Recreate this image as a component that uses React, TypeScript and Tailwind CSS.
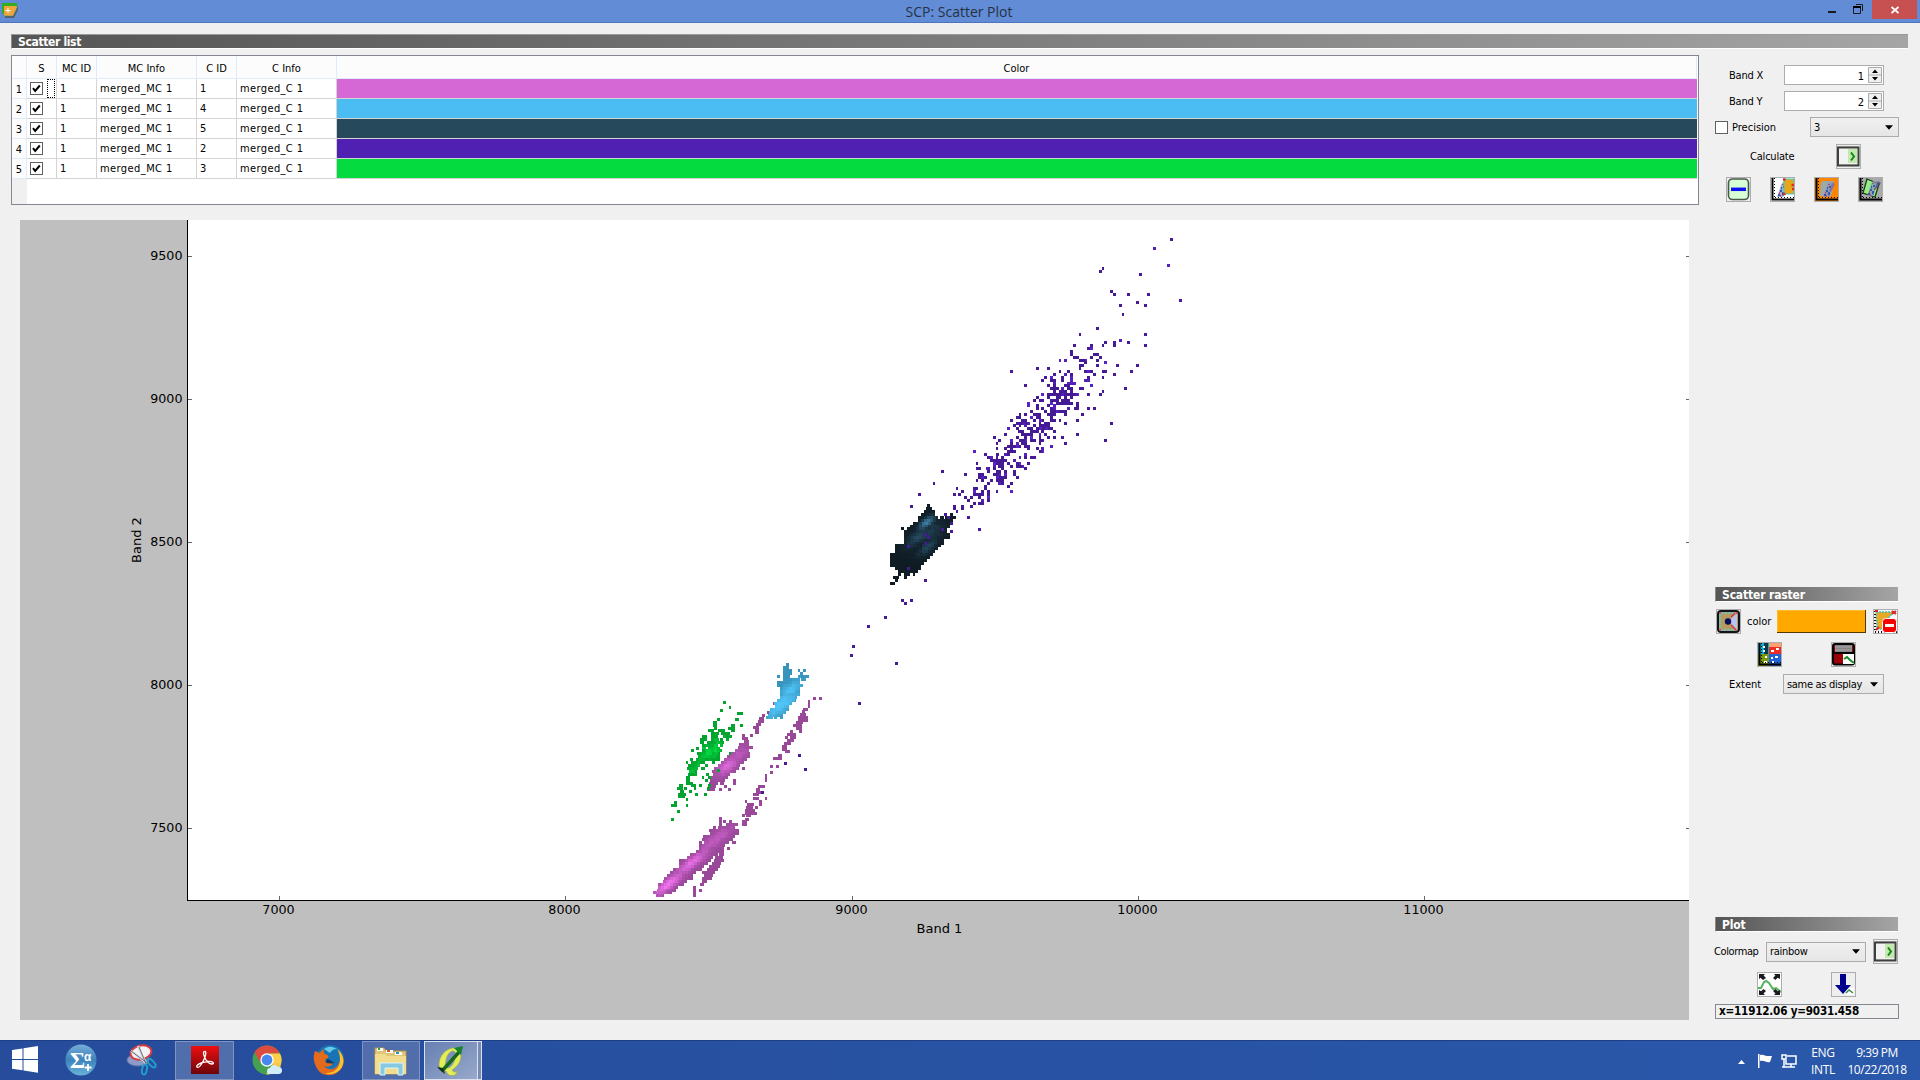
import React from "react";

type Spans = string;
type Ridge = { x: number; y: number; a: number; b: number; w: number };

const SLOPE = -0.78;

/* Every row is "top:start-end,start-end" in thirds of a pixel, relative to the origin. */
const purpleUpper: Spans =
  "54:630-639|81:579-588|132:621-630|141:426-432|150:417-426|159:537-546|210:450-459|219:459-468,501-510,561-570|237:657-666|243:528-537|252:477-486,552-561|279:486-492|321:408-417|339:357-363,552-561|357:477-486|363:432-441,459-468,501-510|372:339-348,390-399,426-432,459-468,552-561|381:381-399|390:330-339|399:330-339,399-417|408:339-357,390-399,417-426|417:297-303,312-321,357-381,408-417|423:372-381,432-441|432:357-372,408-417,468-477,528-537|441:228-237,261-270,357-363|450:150-159,297-303,321-330,372-399,426-441,510-519|459:279-288,312-321,330-339,399-408,459-468|468:252-261,270-279,303-312,330-339,381-390,426-432|477:243-252,270-288,303-312,330-339,372-390|486:279-288,321-348|492:192-201,261-270,279-288,312-330,390-399|501:270-297,303-312,321-339,357-372,492-501|510:279-288,297-321,330-339,426-432|519:243-252,261-312,312-357,381-390,417-426|528:228-237,261-270,288-303,312-321,330-339|537:219-228,237-252,270-297,303-330|546:201-210,270-279,288-339,348-357|552:201-210,228-237,261-270,279-288,348-357|561:228-237,243-252,270-288,321-330,342-357,381-390,399-408|570:210-219,252-261,270-321|579:177-183,192-201,219-243,261-288,312-321,363-372|588:168-183,210-219,228-243,270-279|597:150-159,183-201,219-228,237-252,270-288,297-303,348-357|606:168-210,237-243,252-270,312-321,450-459|612:159-168,177-183,192-201,219-228,237-270|621:141-150,168-177,201-219,228-279|630:174-192,210-237,243-252,279-288|639:132-141,183-219,237-243,252-261,348-357|648:99-108,168-177,192-201,210-219,237-243,261-270,279-288,303-312|657:114-123,150-159,177-201,210-228,237-252,432-441|666:108-114,150-159,168-177,183-201,237-243,312-321|675:141-183,192-210,270-279|681:108-114,132-141,150-159,201-210,228-237,243-252|690:39-48,141-168,237-252|699:72-81,108-117,132-150,192-201|708:81-99,108-114,123-132,177-183,192-201,210-228|717:90-141,159-168|726:48-54,99-132,141-150,168-183,201-210|735:99-108,114-132,150-159,168-192|741:48-63,78-90,99-108,123-132,192-201|750:81-90,108-123,132-141,159-168|759:12-21,54-72,99-123,132-141,159-168|768:54-81,108-141,168-177|777:48-54,63-72,90-99,108-132|786:81-90,114-132,150-159|795:72-81,141-150|801:39-54,72-81|810:3-12,39-48,63-72,81-90,108-114,150-159|819:0-3,39-72,81-90|828:12-21,30-39,54-63,81-90|837:21-30,63-72,81-90|846:39-48,54-72|855:3-12,30-39|860:3-12|888:21-30";

const purpleLower: Spans =
  "90:243-252|126:219-225|141:288-294|159:174-183,279-288,294-303|195:150-159,279-288|201:279-288|210:288-294|219:252-261|228:261-270|246:270-279|264:243-252,354-363|270:270-279|279:192-201|288:201-210|306:192-201|315:141-150|382:141-150|417:192-201|477:123-132,150-159|486:132-141|528:72-81|555:21-30|666:105-114";

const dark: Spans =
  "192:201-210|201:198-216|210:192-225|219:183-225,270-279|228:174-234,240-252,255-288|237:174-279|246:159-279|255:150-270|261:123-132,141-261|270:132-261,270-279|279:132-270|288:132-270|297:132-252|306:132-252|312:105-243|321:105-234|330:105-225|339:90-219|348:90-210|357:90-201|366:90-192|372:90-183|381:105-183|390:114-174|399:114-123,132-150,159-165|408:99-117,132-141|417:105-114|426:90-105";

const magenta: Spans =
  "411:237-246|420:237-246,249-258,267-276|429:237-246,258-294|438:219-228,234-285|447:207-297|456:210-297|465:189-285|474:186-280|483:177-186,192-267,276-288|492:177-255|501:177-252,261-270|510:168-252|519:150-234,237-252|528:141-220,225-250|537:117-213,222-250|546:117-204,216-243|555:117-192,207-240|564:99-186,201-234|573:90-168,186-225|582:81-159,192-219|591:72-159,186-216|600:69-141,186-201|609:54-132,180-190|618:54-114,159-168|627:51-108,159-168,177-186|633:39-96,159-168|641:48-72,159-168|163:306-315,330-339|172:306-324|181:312-327|190:297-327|199:294-339|208:285-327|217:270-330|226:261-330|235:252-321|244:243-312|253:234-300|262:222-297,306-315|271:216-288|280:219-270|289:213-264|298:210-255,279-288|307:207-234,240-250,279-288|316:204-228,252-261|323:201-225,237-246,264-273|67:399-405|94:381-390|103:366-375|112:357-372|121:354-372|130:348-363|139:339-357|148:345-357|153:345-357|51:519-528,537-546|60:504-510|69:504-510|75:504-510|84:489-504|91:486-495|100:480-498|109:475-504|117:475-504|124:467-486|133:459-486|142:468-486|151:450-459,477-486|160:441-468|169:435-444,450-468|178:441-460|187:432-452|196:426-441|203:426-441|211:435-450|223:414-425|231:399-426|255:390-399,408-417|272:390-399|283:375-381|291:375-381|298:375-381|314:354-375|323:348-360|332:348-372|340:339-357|350:339-357,375-381|359:315-321,357-366|368:320-339,357-366|377:318-339,345-354|386:315-345|395:315-350|402:306-315,318-333|413:315-327|420:306-320|428:306-320";

const green: Spans =
  "63:249-258|78:267-273|87:240-249|96:291-309|114:231-240,285-297|123:219-231|132:219-231,273-285,300-309|141:222-231,264-285|147:204-222,234-255,273-285|156:213-237,243-270|165:186-201,213-234,249-276|174:180-201,213-237,240-249,258-267|183:180-192,201-252|192:186-234,240-249|201:168-177,186-198,204-240|207:153-162,186-246|216:171-240,267-273|225:174-240|234:150-159,168-240|243:138-144,153-195,216-225|252:144-180,195-204|261:141-174,183-195|267:231-240|270:147-171|279:144-170,198-207|288:138-150,186-192,204-213|297:138-150,195-204|306:138-159|312:117-129,153-168,177-186,204-213|321:111-129,132-141,162-168,201-210|330:120-132,147-156|339:114-138,165-174,192-201|345:114-135|354:138-144|363:102-111|372:93-111,138-144|389:111-120|414:93-102";

const blue: Spans =
  "24:108-117|33:99-117|42:99-126,144-150,159-168|51:99-126,150-159|60:81-90,99-120,144-177|69:99-150,153-168|78:81-150|87:81-159|96:90-150|105:90-150|114:90-150|123:90-141|132:81-138|141:72-126|150:75-117|159:60-117|168:57-108|177:54-99|183:48-70,72-81,90-99";

function noise(x: number, y: number) {
  const v = Math.sin(x * 12.9898 + y * 78.233) * 43758.5453;
  return v - Math.floor(v);
}

function mix(a: number[], b: number[], t: number) {
  return `rgb(${a.map((v, i) => Math.round(v + (b[i] - v) * t)).join(",")})`;
}

function Cloud({ data, ox, oy, low, high, ridges, grain = 0.15, sparse = false }: {
  data: Spans; ox: number; oy: number; low: number[]; high: number[]; ridges: Ridge[]; grain?: number; sparse?: boolean;
}) {
  const cells: React.ReactNode[] = [];
  data.split("|").forEach((row) => {
    const [top, list] = row.split(":");
    const y = Number(top);
    list.split(",").forEach((span) => {
      const [s, e] = span.split("-").map(Number);
      for (let x = s; x < e; x += 9) {
        const w = Math.min(9, e - x);
        let t = 0;
        ridges.forEach((r) => {
          const dx = x + 4 - r.x;
          const dy = y + 4 - r.y;
          const n = Math.hypot(1, SLOPE);
          const along = (dx + dy * SLOPE) / n;
          const across = (dx * -SLOPE + dy) / n;
          t = Math.max(t, r.w * Math.exp(-((along / r.a) ** 2) - (across / r.b) ** 2));
        });
        const n = noise(x, y);
        t = sparse ? (n > 0.8 ? (n - 0.6) * 2 : 0) : Math.min(1, Math.max(0, t + (n - 0.5) * grain * (t > 0.12 ? 1 : 0.2)));
        const px = Math.round(ox + x / 3);
        cells.push(
          <rect key={`${x}_${y}`} x={px} y={Math.round(oy + y / 3)} width={Math.max(1, Math.round(ox + (x + w) / 3) - px)} height={3} fill={mix(low, high, t)} />
        );
      }
    });
  });
  return <g shapeRendering="crispEdges">{cells}</g>;
}

function Plot() {
  const xs: [number, number][] = [[278, 7000], [564, 8000], [851, 9000], [1137, 10000], [1423, 11000]];
  const ys: [number, number][] = [[256, 9500], [399, 9000], [542, 8500], [685, 8000], [828, 7500]];
  const strays: [number, number][] = [[798, 754], [784, 762], [804, 768], [761, 791], [850, 654], [852, 645], [858, 702]];
  return (
    <svg className="block h-[800px] w-[1669px]" viewBox="20 220 1669 800" fontFamily="DejaVu Sans" fontSize="12.7" fill="#000">
      <rect x="20" y="220" width="1669" height="800" fill="#bfbfbf" />
      <rect x="188" y="220" width="1501" height="680" fill="#fff" />
      <Cloud data={magenta} ox={640} oy={680} low={[153, 72, 153]} high={[246, 116, 243]} ridges={[
        { x: 85, y: 612, a: 50, b: 14, w: 1 }, { x: 155, y: 548, a: 60, b: 14, w: 0.85 }, { x: 225, y: 480, a: 65, b: 16, w: 0.45 }, { x: 262, y: 258, a: 38, b: 17, w: 0.7 }, { x: 292, y: 226, a: 40, b: 20, w: 0.35 }]} />
      <Cloud data={green} ox={640} oy={680} low={[2, 163, 46]} high={[0, 222, 64]} ridges={[{ x: 215, y: 210, a: 45, b: 17, w: 0.85 }, { x: 165, y: 265, a: 24, b: 13, w: 0.4 }]} grain={0.7} />
      <Cloud data={blue} ox={750} oy={655} low={[55, 147, 187]} high={[79, 197, 248]} ridges={[{ x: 92, y: 148, a: 60, b: 23, w: 1.1 }, { x: 122, y: 105, a: 42, b: 18, w: 0.9 }]} grain={0.25} />
      <Cloud data={dark} ox={860} oy={440} low={[15, 28, 36]} high={[65, 132, 171]} ridges={[{ x: 199, y: 248, a: 27, b: 12, w: 0.95 }, { x: 175, y: 290, a: 45, b: 17, w: 0.42 }, { x: 202, y: 322, a: 32, b: 14, w: 0.42 }, { x: 212, y: 275, a: 40, b: 30, w: 0.28 }]} grain={0.1} />
      <Cloud data={purpleUpper} ox={960} oy={220} low={[68, 27, 148]} high={[96, 38, 222]} ridges={[]} sparse />
      <Cloud data={purpleLower} ox={860} oy={440} low={[68, 27, 148]} high={[68, 27, 148]} ridges={[]} />
      <g fill="#441b94" shapeRendering="crispEdges">
        {strays.map(([x, y]) => <rect key={x} x={x} y={y} width="3" height="3" />)}
      </g>
      <g shapeRendering="crispEdges">
        <rect x="187" y="220" width="1" height="681" /><rect x="187" y="900" width="1502" height="1" />
        {xs.map(([x]) => <rect key={x} x={x + 1} y="896" width="1" height="4" fill="#666" />)}
        {ys.map(([y]) => <g key={y} fill="#666"><rect x="188" y={y} width="4" height="1" /><rect x="1686" y={y} width="3" height="1" /></g>)}
      </g>
      {xs.map(([x, v]) => <text key={v} x={x + 0.5} y="914" textAnchor="middle">{v}</text>)}
      {ys.map(([y, v]) => <text key={v} x="182.5" y={y + 3.5} textAnchor="end">{v}</text>)}
      <text x="939.5" y="933" textAnchor="middle" fontSize="13">Band 1</text>
      <text transform="translate(141 540) rotate(-90)" textAnchor="middle" fontSize="13">Band 2</text>
    </svg>
  );
}

function Check({ on }: { on?: boolean }) {
  return (
    <span className="flex h-[13px] w-[13px] items-center justify-center border border-[#606060] bg-white">
      {on && <svg viewBox="0 0 11 11" className="h-[11px] w-[11px]"><path d="M2 5.2 4.2 8 8.8 2.5" fill="none" stroke="#000" strokeWidth="2" /></svg>}
    </span>
  );
}

const rows = [
  { id: 1, c: "1", color: "bg-[#d668d6]" },
  { id: 2, c: "4", color: "bg-[#4bbdf2]" },
  { id: 3, c: "5", color: "bg-[#27495c]" },
  { id: 4, c: "2", color: "bg-[#4f20b2]" },
  { id: 5, c: "3", color: "bg-[#03db3f]" },
];

const GRID = "grid grid-cols-[15px_30px_40px_100px_40px_100px_1fr]";
const HEAD = "flex items-center justify-center border-r border-b border-[#e0ecfb] pt-[4px]";
const CELL = "flex items-center border-r border-b border-[#d4d4d4] pl-[3px] pt-[1px]";

function Table() {
  return (
    <div className="flex h-[150px] w-[1688px] flex-col border border-[#828790] bg-white pr-[1px]">
      <div className={`${GRID} h-[23px] bg-[#fcfcfc]`}>
        {["", "S", "MC ID", "MC Info", "C ID", "C Info", "Color"].map((h, i) => <div key={i} className={HEAD}>{h}</div>)}
      </div>
      {rows.map((r) => (
        <div key={r.id} className={`${GRID} h-[20px]`}>
          <div className="flex items-center justify-center border-r border-b border-[#e0ecfb] bg-[#fcfcfc] pt-[2px]">{r.id}</div>
          <div className="flex items-center border-r border-b border-[#d4d4d4] pl-[3px]">
            <Check on />
            {r.id === 1 && <span className="ml-[4px] h-[19px] w-[8px] border border-dotted border-black" />}
          </div>
          <div className={CELL}>1</div>
          <div className={`${CELL} tracking-[0.42px]`}>merged_MC 1</div>
          <div className={CELL}>{r.c}</div>
          <div className={`${CELL} tracking-[0.38px]`}>merged_C 1</div>
          <div className={`${r.color} border-b border-[#d4d4d4]`} />
        </div>
      ))}
      <div className="w-[15px] flex-1 bg-[#f0f0f0]" />
    </div>
  );
}

function Bar({ children, wide }: { children: string; wide?: boolean }) {
  return (
    <div className={`${wide ? "w-[1897px] border-t border-t-[#9a9a9a] tracking-[-0.35px]" : "w-[183px] tracking-[-0.15px]"} flex h-[15px] items-center border-b border-l border-b-white border-l-[#8a8a8a] bg-gradient-to-r from-[#555] to-[#a5a5a5] pt-[1px] pl-[6px] text-[12px] leading-none font-bold text-white`}>
      {children}
    </div>
  );
}

function Tool({ children }: { children: React.ReactNode }) {
  return <div className="flex h-[25px] w-[25px] shrink-0 items-center justify-center border border-[#adadad] bg-[#eee]"><svg viewBox="0 0 23 23" className="h-[23px] w-[23px]">{children}</svg></div>;
}

function Spin({ v }: { v: number }) {
  return (
    <div className="flex h-[20px] w-[100px] items-center justify-end border border-[#abadb3] bg-white pr-[1px]">
      <span className="mr-[4px] pt-[3px]">{v}</span>
      <svg viewBox="0 0 14 16" className="h-[16px] w-[14px]"><path d="M.5.5h13v15H.5zM.5 8h13" fill="#f0f0f0" stroke="#acacac" /><path d="M4 6 7 2.5 10 6zM4 10l3 3.5 3-3.5z" /></svg>
    </div>
  );
}

function Combo({ text, w }: { text: string; w: string }) {
  return (
    <div className={`${w} flex h-[20px] shrink-0 items-center justify-between border border-[#acacac] bg-gradient-to-b from-[#f0f0f0] to-[#e6e6e6] pr-[5px] pl-[3px]`}>
      <span className="pt-[1px] tracking-[-0.3px] whitespace-nowrap">{text}</span>
      <svg viewBox="0 0 8 5" className="h-[5px] w-[8px]"><path d="M0 .3h8L4 4.8z" /></svg>
    </div>
  );
}

const RunIcon = () => (
  <Tool>
    <path d="M1.5 2h20v18h-20z" fill="#f2f2f2" stroke="#b9b9b9" /><path d="M11 4h9v14h-9z" fill="#c4e9b0" /><path d="M1 2.5h20.5v18H1z" fill="none" stroke="#3d403d" strokeWidth="2" /><path d="m14 7.5 3 4-3 4" fill="none" stroke="#178617" strokeWidth="2" />
  </Tool>
);

const Axes = () => <><path d="M1.5 0v21.5H23" fill="none" stroke="#000" strokeWidth="2" /><path d="M3.5 0v20M4 19.5h19" fill="none" stroke="#000" strokeDasharray="1 2" /></>;

/* Coarse diagonal point cloud shared by the scatter tool icons. */
const Dots = () => (
  <g>
    <path d="m6 19 4-12 2-3h4l1 3-5 12z" fill="#8795b5" opacity=".75" />
    <path d="M7 16h2v2H7zM9 12h2v2H9zM11 14h2v3h-2zM12 8h2v2h-2zM10 9h1v2h-1z" fill="#4452b0" />
    <path d="M9 17h1v2H9zM8 14h1v2H8zM13 11h1v2h-1zM11 6h2v1h-2z" fill="#b8506c" />
    <path d="M10 11h1v1h-1zM14 6h1v2h-1zM11 17h2v1h-2z" fill="#4aa7b0" />
  </g>
);

function ScatterTools() {
  return (
    <div className="mt-[8px] ml-[11px] flex gap-[19px]">
      <Tool><rect x="1.5" y="1" width="20" height="20.5" rx="4" fill="#d6ffd6" stroke="#4b574b" strokeWidth="1.6" /><path d="M4 11.3h15" stroke="#1010f2" strokeWidth="3.5" /></Tool>
      <Tool><rect width="23" height="23" fill="#fff" /><Dots /><path d="M13 1h10v15H13z" fill="#e6a817" stroke="#3bc9d2" /><path d="M12 1.500h2.500M12 16h2.500M20.500 7h2.500M21 11h2" stroke="#e02828" strokeWidth="2.500" /><Axes /></Tool>
      <Tool><rect width="23" height="23" fill="#ff8400" /><path d="m6 4 4-1h9v4l-3 11H5z" fill="#9daaaa" /><g transform="translate(2)"><Dots /></g><path d="m14 13 4-9 2 2-4 8z" fill="#8569a3" opacity=".8" /><Axes /></Tool>
      <Tool><rect width="23" height="23" fill="#a9a9a9" /><path d="m8 1 12 5-4 13-12-4z" fill="#90f080" stroke="#193d19" strokeWidth="1.3" /><g transform="translate(2 -1)"><Dots /></g><path d="m15 12 4-9 3 2-4 5z" fill="#4d4487" opacity=".75" /><Axes /></Tool>
    </div>
  );
}

function Side() {
  return (
    <div className="flex h-[968px] w-[204px] flex-col pl-[16px]">
      <div className="mt-[10px] flex h-[20px] items-center"><span className="w-[69px] pt-[1px] pl-[14px] tracking-[-0.2px]">Band X</span><Spin v={1} /></div>
      <div className="mt-[6px] flex h-[20px] items-center"><span className="w-[69px] pt-[1px] pl-[14px] tracking-[-0.2px]">Band Y</span><Spin v={2} /></div>
      <div className="mt-[6px] flex h-[20px] items-center"><Check /><span className="ml-[4px] w-[78px] pt-[1px]">Precision</span><Combo text="3" w="w-[89px]" /></div>
      <div className="mt-[7px] flex h-[25px] items-center"><span className="w-[86px] pt-[1px] pl-[35px] tracking-[-0.2px] whitespace-nowrap">Calculate</span><div className="ml-[35px]"><RunIcon /></div></div>
      <ScatterTools />
      <div className="mt-[385px]"><Bar>Scatter raster</Bar></div>
      <div className="mt-[7px] ml-[1px] flex h-[25px] items-center">
        <Tool>
          <rect x="1" y="1" width="21" height="21" rx="3" fill="#b69b61" stroke="#11151b" strokeWidth="2" /><path d="m20 3-8 8 8 9z" fill="#bac3f0" /><path d="M3 3h17M3 3v17h15" fill="none" stroke="#6fc5c9" strokeWidth="1.5" strokeDasharray="3 1" /><path d="M2 3h2M2 20h2M19 3h2M14 7l4-4M14 15l5 5" stroke="#d7354d" strokeWidth="1.3" /><circle cx="11" cy="11.5" r="3.200" fill="#0b0d5b" />
        </Tool>
        <span className="w-[36px] pt-[1px] pl-[6px]">color</span>
        <div className="h-[23px] w-[89px] border-r border-b border-[#553900] bg-[#ffa900] shadow-[inset_1px_1px_0_#ffba2f]" />
        <div className="ml-[7px]"><Tool>
          <rect width="23" height="23" fill="#f8f8f8" /><path d="M2 2h18l-6 6-2 11H3z" fill="#e8aa24" stroke="#42bdc3" strokeWidth="1.5" strokeDasharray="2 1" /><path d="M1 1v21h22" fill="none" stroke="#111" strokeDasharray="1 2" strokeWidth="2" /><path d="m18 1 4 3m0-3-4 3M1 1h3M2 20l3-3" stroke="#e02222" strokeWidth="2" /><rect x="8.5" y="8.5" width="14" height="14" rx="3" fill="#f80000" stroke="#fff" /><path d="M11 15.5h9" stroke="#fff" strokeWidth="3" />
        </Tool></div>
      </div>
      <div className="mt-[8px] ml-[42px] flex gap-[49px]">
        <Tool>
          <path d="M0 0h11v11H0z" fill="#16a9cc" /><path d="M11 0h12v11H11z" fill="#ee2e24" /><path d="M11 0h12v4H11z" fill="#ffa071" /><path d="M0 11h11v12H0z" fill="#7b9912" /><path d="M11 11h12v12H11z" fill="#1e63d8" /><path d="M6 0h4v11H6z" fill="#063b50" /><path d="M18 5h3v2h-3zM5 7h2v2H5zM5 3h2v2H5zM13 7h3v2h-3zM7 13h2v2H7zM13 14h2v2h-2zM17 13h3v2h-3zM6 18h3v2H6zM14 18h2v2h-2z" fill="#fff" /><Axes />
        </Tool>
        <Tool>
          <rect x="1" y="1" width="21" height="20.5" rx="2" fill="#9b0008" stroke="#050505" strokeWidth="2" /><path d="M3 2h17v7H3z" fill="#858585" /><path d="M3 4h17M3 7h17" stroke="#aaa" /><path d="M1 10h21" stroke="#000" strokeWidth="2" /><path d="M11 11h11v10H11z" fill="#fff" /><path d="m12 16 3-2 3 3 4 3" fill="none" stroke="#168a25" strokeWidth="2" />
        </Tool>
      </div>
      <div className="mt-[7px] flex items-center"><span className="w-[68px] pt-[1px] pl-[14px]">Extent</span><Combo text="same as display" w="w-[101px]" /></div>
      <div className="mt-[223px]"><Bar>Plot</Bar></div>
      <div className="mt-[7px] flex h-[25px] items-center"><span className="-ml-[1px] w-[52px] pt-[1px] tracking-[-0.4px] whitespace-nowrap">Colormap</span><Combo text="rainbow" w="w-[100px]" /><div className="ml-[7px]"><RunIcon /></div></div>
      <div className="mt-[8px] ml-[42px] flex gap-[49px]">
        <Tool><rect width="23" height="23" fill="#fff" /><path d="M0 15h3l3-6 2-1 3 2 4 6 3-1 5 4" fill="none" stroke="#55b45b" strokeWidth="2" /><path d="M1 1h6L5.6 2.5 8 5 5 7 2.5 4.8 1 6zM22 1h-6l1.4 1.5L15 5l2.5 2 2-2.2L22 6zM1 22h6l-1.5-1.5L8 18l-2.5-2-2.4 2.3L1 17zM22 22h-6l1.5-1.5L15 18l2.5-2 2.4 2.3L22 17z" fill="#1a1a24" /></Tool>
        <Tool><path d="M14 15h8v7h-8z" fill="#fff" /><path d="M8 1h6v11h5l-8 9-8-9h5z" fill="#00008f" /><path d="m14 20 3-3 4 3" fill="none" stroke="#348744" strokeWidth="1.4" /></Tool>
      </div>
      <div className="mt-[7px] flex h-[15px] w-[184px] items-center border border-[#828790] pt-[1px] pl-[3px] text-[11.6px] leading-none font-bold tracking-[-0.2px] whitespace-nowrap">x=11912.06 y=9031.458</div>
    </div>
  );
}

function Taskbar() {
  return (
    <div className="flex h-[40px] items-stretch border-t border-[#1d3f87] bg-gradient-to-r from-[#264c9b] to-[#2a58aa] text-white">
      <div className="flex w-[50px] items-center justify-center pb-[2px]">
        <svg viewBox="0 0 28 27" className="h-[27px] w-[28px]"><path d="m1 4 10.500-1.500V13H1zM12.500 2.300 27 0v13H12.500zM1 14h10.500v10.200L1 22.800zM12.500 14H27v12.700l-14.500-2.300z" fill="#fff" /></svg>
      </div>
      <div className="flex w-[62px] items-center justify-center pb-[2px]">
        <svg viewBox="0 0 32 32" className="h-[32px] w-[32px]"><defs><linearGradient id="sg" x2="0" y2="1"><stop stopColor="#76add8" /><stop offset=".5" stopColor="#3c82bd" /><stop offset="1" stopColor="#68b3da" /></linearGradient></defs><circle cx="16" cy="16" r="15.500" fill="url(#sg)" /><text x="5" y="24" fontFamily="Liberation Serif" fontSize="23" fontWeight="bold" fill="#fff">Σ</text><text x="19" y="17" fontFamily="Liberation Sans" fontSize="12" fontWeight="bold" fill="#fff">α</text><path d="M23 20v7m-3.500-3.500h7" stroke="#fff" strokeWidth="1.800" /></svg>
      </div>
      <div className="flex w-[60px] items-center justify-center pb-[2px]">
        <svg viewBox="0 0 32 32" className="h-[32px] w-[32px]"><ellipse cx="12" cy="16" rx="11" ry="6" fill="#8c9bc9" stroke="#6679ad" /><ellipse cx="15" cy="8.500" rx="10.500" ry="7" transform="rotate(-12 15 8.500)" fill="#f1f2f5" stroke="#d73b40" strokeWidth="2" /><path d="m5 7 16 12M12 2l8 18" stroke="#d9dce2" strokeWidth="2.500" /><path d="m5 7 16 12M13 3l7 17" stroke="#4c5260" strokeWidth=".8" /><ellipse cx="25.500" cy="19" rx="5.500" ry="2.400" transform="rotate(48 25.500 19)" fill="none" stroke="#239ccc" strokeWidth="2" /><ellipse cx="18.500" cy="25.500" rx="2.400" ry="5" transform="rotate(12 18.500 25.500)" fill="none" stroke="#239ccc" strokeWidth="2" /></svg>
      </div>
      <div className="ml-[3px] flex w-[59px] items-center justify-center border border-[#8193bf] bg-[#506dac] pb-[2px]">
        <svg viewBox="0 0 28 28" className="h-[28px] w-[28px]"><defs><linearGradient id="pg" x2="0" y2="1"><stop stopColor="#ee0e10" /><stop offset="1" stopColor="#6c0608" /></linearGradient></defs><rect width="28" height="28" fill="url(#pg)" /><path d="M14 12c-2-4-2-7 0-6.500 1.800.5.500 5-1.500 9-2 4-4.500 7.500-6.300 6.800C4 19.500 10 16 17 15.500c6-.3 6.500 2.500 4 2.500-3 0-6-3.500-7-6Z" fill="none" stroke="#fff" strokeWidth="1.300" /></svg>
      </div>
      <div className="flex w-[65px] items-center justify-center pb-[2px]">
        <svg viewBox="0 0 30 30" className="h-[30px] w-[30px]"><circle cx="15" cy="15" r="14.500" fill="#45a151" /><path d="M2.500 7.600A14.500 14.500 0 0 1 28 8.600H15L8.800 18Z" fill="#db4c3f" /><path d="M28 8.600A14.500 14.500 0 0 1 14 29.500l7-11-3-10Z" fill="#fdd04b" /><circle cx="15" cy="15" r="6.700" fill="#fff" /><circle cx="15" cy="15" r="5.400" fill="#4688ed" /><circle cx="25" cy="21" r="3.500" fill="#fbc54a" /><path d="M18 29a3 3 0 0 1 0-6 4.500 4.500 0 0 1 8-1 3.500 3.500 0 0 1 1 7z" fill="#d2edfa" /></svg>
      </div>
      <div className="flex w-[60px] items-center justify-center pb-[2px]">
        <svg viewBox="0 0 32 32" className="h-[32px] w-[32px]"><circle cx="17" cy="15" r="14" fill="#1874b4" /><path d="M11 5c5-4 10-2 13 0-4 0-6 2-7 4z" fill="#65c9e8" /><path d="M2 7c2 1 3 1 5 2 1-2 2-3 4-4-1 3 0 5 3 6 2 1 2 3-1 4-2 1-1 4 2 4 2 0 3-1 5 0-2 5-9 4-10 2 3 5 11 6 15 0 4-6 2-12 0-15 8 6 7 17 0 22-6 5-16 4-20-2C0 19 0 12 2 7Z" fill="#e66a1c" /><path d="M24 5c9 7 8 18 0 23-5 3-10 2-12 1 9 1 15-5 15-13 0-5-1-8-3-11Z" fill="#f7c430" /><path d="M14 15c3 0 5 3 8 4-4 1-6 0-9 0z" fill="#113c6c" /></svg>
      </div>
      <div className="ml-[3px] flex w-[58px] items-center justify-center border border-[#8193bf] bg-[#506dac]">
        <svg viewBox="0 0 34 30" className="h-[30px] w-[34px]"><path d="M1 2h9l2 3h20v23H1z" fill="#dfc777" stroke="#b5984c" /><path d="M3 2h6v3H3zM12 4h7v3h-7zM21 6h7v3h-7z" fill="#fff" /><path d="M4 2h2v2H4z" fill="#28a32e" /><path d="M13 4h3v2h-3z" fill="#d4572c" /><path d="M22 6h3v2h-3z" fill="#2293cc" /><path d="M1 8h10l2 2h19v18H1z" fill="#f2dc8d" /><path d="M6 28V17h23v12h-5v-7H11v7H6z" fill="#88c9df" stroke="#d7f7ff" /></svg>
      </div>
      <div className="ml-[4px] flex w-[54px] items-center justify-center border border-[#dce2ed] bg-gradient-to-br from-[#6680b3] to-[#99a9ca]">
        <svg viewBox="0 0 30 32" className="h-[32px] w-[30px]"><path fillRule="evenodd" d="M18 3c-8 0-15 8-15 16 0 5 3 7 7 7 2 5 5 5 9 4l3-4c-3 2-5 1-6-1 6-4 9-9 9-14 0-5-3-8-7-8Zm-1 3c3 0 3 3 2 8-1 4-4 9-7 9-3 0-3-4-2-8 1-5 4-9 7-9Z" fill="#e2ed58" stroke="#99a64b" strokeWidth=".6" /><path d="M6 26 24 6" stroke="#17671f" strokeWidth="3.400" /><path d="m18 3 9-2-2 9z" fill="#16842a" /><path d="m1 22 6 1 2 6-4-3z" fill="#12331a" /></svg>
      </div>
      <div className="w-[4px] border border-l-0 border-[#dce2ed] bg-[#768bb7]" />
      <div className="ml-auto flex items-center font-['Open_Sans','Noto_Sans',sans-serif] text-[12px] leading-[17px]">
        <svg viewBox="0 0 64 20" className="mr-[10px] h-[20px] w-[64px]" fill="#fff"><path d="m2 13 3.500-4L9 13z" /><path d="M22 3h1.500v14H22z" /><path d="M24 4c4-1 5 1 7 1h5l-2 6c-4 1-5-2-10-1z" /><path d="M51 5h9v8H50v-4M55 13v3m-4 0h8M46 4h4v4h-4zm2 4v8m-2 0h6" fill="none" stroke="#fff" strokeWidth="1.500" /></svg>
        <div className="w-[26px] text-center tracking-[-0.3px]">ENG<br />INTL</div>
        <div className="mr-[13px] ml-[11px] w-[60px] text-center tracking-[-0.45px] whitespace-nowrap">9:39 PM<br />10/22/2018</div>
      </div>
    </div>
  );
}

export default function App() {
  return (
    <div className="flex h-[1080px] w-[1920px] flex-col overflow-hidden bg-[#f0f0f0] font-['DejaVu_Sans_Condensed','Noto_Sans',sans-serif] text-[11px] leading-[14px] text-black">
      <header className="flex h-[23px] shrink-0 items-start border-b border-[#4d75bb] bg-[#628cd6]">
        <div className="w-[98px] pt-[3px] pl-[2px]"><svg viewBox="0 0 17 16" className="h-[16px] w-[17px]"><path d="M3 4h13v3l-4 8H3z" fill="#4d5550" opacity=".8" /><path d="M1 1h14v4l-4 8H2z" fill="#efa63d" stroke="#2793a1" strokeDasharray="1 1" /><path d="M0 0h15v3H2v8H0z" fill="#32ad1d" /><path d="M6 5v5M3.500 7.500h5" stroke="#fff" /></svg></div>
        <div className="flex-1 text-center font-['Open_Sans','Noto_Sans',sans-serif] text-[14px] leading-[23px] tracking-[0px] text-[#26313f]">SCP: Scatter Plot</div>
        <div className="flex h-[19px] w-[100px] items-center">
          <svg viewBox="0 0 72 19" className="h-[19px] w-[72px]"><path d="M8 11h8v2H8z" fill="#1b1b1b" /><path d="M33.500 6.500h7v7h-7zM36 4.500h6.500V11" fill="none" stroke="#1b1b1b" /><path d="M33 6h8v2h-8z" /></svg>
        </div>
        <div className="-ml-[48px] mr-[3px] flex h-[19px] w-[45px] items-center justify-center bg-[#c75050]"><svg viewBox="0 0 8 8" className="h-[8px] w-[8px]"><path d="m.500 1 7 6m0-6-7 6" stroke="#fff" strokeWidth="1.800" /></svg></div>
      </header>
      <main className="flex h-[1017px] shrink-0 flex-col pt-[11px] pl-[11px]">
        <Bar wide>Scatter list</Bar>
        <div className="mt-[6px] flex">
          <div className="flex flex-col">
            <Table />
            <div className="mt-[15px] ml-[9px]"><Plot /></div>
          </div>
          <Side />
        </div>
      </main>
      <Taskbar />
    </div>
  );
}
